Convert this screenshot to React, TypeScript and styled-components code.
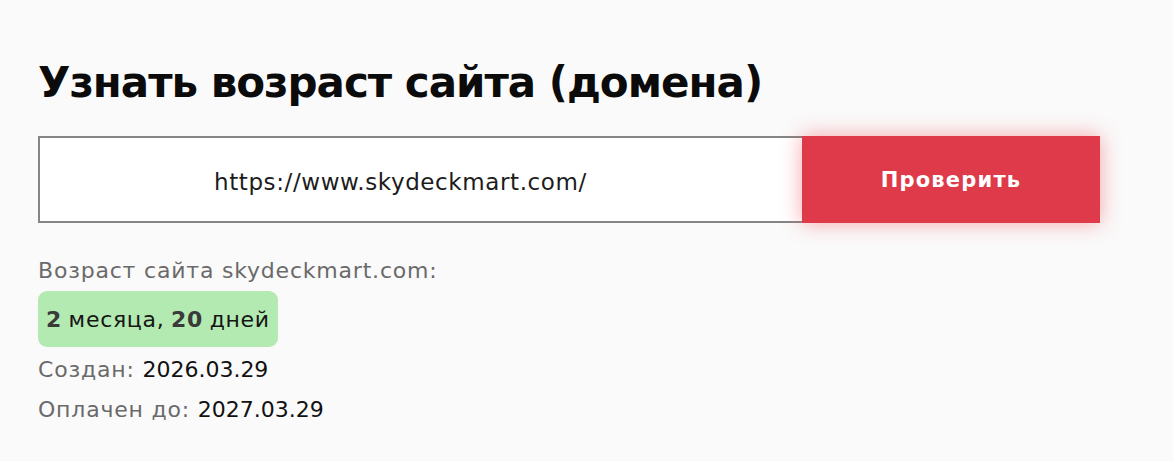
import React, { useState } from 'react';
import styled, { createGlobalStyle } from 'styled-components';

const GlobalStyle = createGlobalStyle`
  html, body {
    margin: 0;
    padding: 0;
    background: #fafafa;
  }
  body {
    font-family: 'DejaVu Sans', 'Noto Sans', sans-serif;
  }
`;

const App: React.FC = () => {
  const [url, setUrl] = useState('https://www.skydeckmart.com/');

  return (
    <Page>
      <GlobalStyle />
      <Title>Узнать возраст сайта (домена)</Title>

      <CheckForm onSubmit={(e) => e.preventDefault()}>
        <UrlInput value={url} onChange={(e) => setUrl(e.target.value)} />
        <CheckButton type="submit">Проверить</CheckButton>
      </CheckForm>

      <Result>
        <Line>Возраст сайта skydeckmart.com:</Line>
        <AgeBadge>
          <b>2</b> месяца, <b>20</b> дней
        </AgeBadge>
        <Line>
          Создан: <Value>2026.03.29</Value>
        </Line>
        <Line>
          Оплачен до: <Value>2027.03.29</Value>
        </Line>
      </Result>
    </Page>
  );
};

const Page = styled.div`
  padding: 55px 38px 0;
`;

const Title = styled.h1`
  margin: 0 0 25px;
  font-size: 42px;
  font-weight: 700;
  letter-spacing: -1px;
  color: #0b0b0b;
  line-height: 56px;
`;

const CheckForm = styled.form`
  display: flex;
  width: 1062px;
  height: 87px;
`;

const UrlInput = styled.input`
  box-sizing: border-box;
  width: 764px;
  height: 100%;
  border: 2px solid #858585;
  border-right: none;
  background: #ffffff;
  padding: 4px 0 0 174px;
  font-family: inherit;
  font-size: 23px;
  letter-spacing: 0.6px;
  color: #1c1c1c;
  outline: none;
`;

const CheckButton = styled.button`
  flex: 1;
  height: 100%;
  border: none;
  background: #df3a4a;
  color: #ffffff;
  font-family: inherit;
  font-size: 21px;
  font-weight: 700;
  letter-spacing: 1.2px;
  box-shadow: 0 0 20px rgba(240, 60, 72, 0.45);
  cursor: pointer;
`;

const Result = styled.div`
  display: flex;
  flex-direction: column;
  align-items: flex-start;
  margin-top: 28px;
`;

const Line = styled.div`
  font-size: 22px;
  line-height: 40px;
  letter-spacing: 0.8px;
  color: #6a6a6a;
`;

const Value = styled.span`
  color: #111111;
  letter-spacing: 0;
`;

const AgeBadge = styled.div`
  margin-bottom: 3px;
  padding: 0 8px;
  height: 56px;
  display: flex;
  align-items: center;
  gap: 0.3em;
  background: #b3eab1;
  border-radius: 9px;
  font-size: 22px;
  letter-spacing: 0.7px;
  color: #151515;
  font-weight: 500;

  b {
    color: #3a3a3a;
    font-weight: 700;
  }
`;

export default App;
